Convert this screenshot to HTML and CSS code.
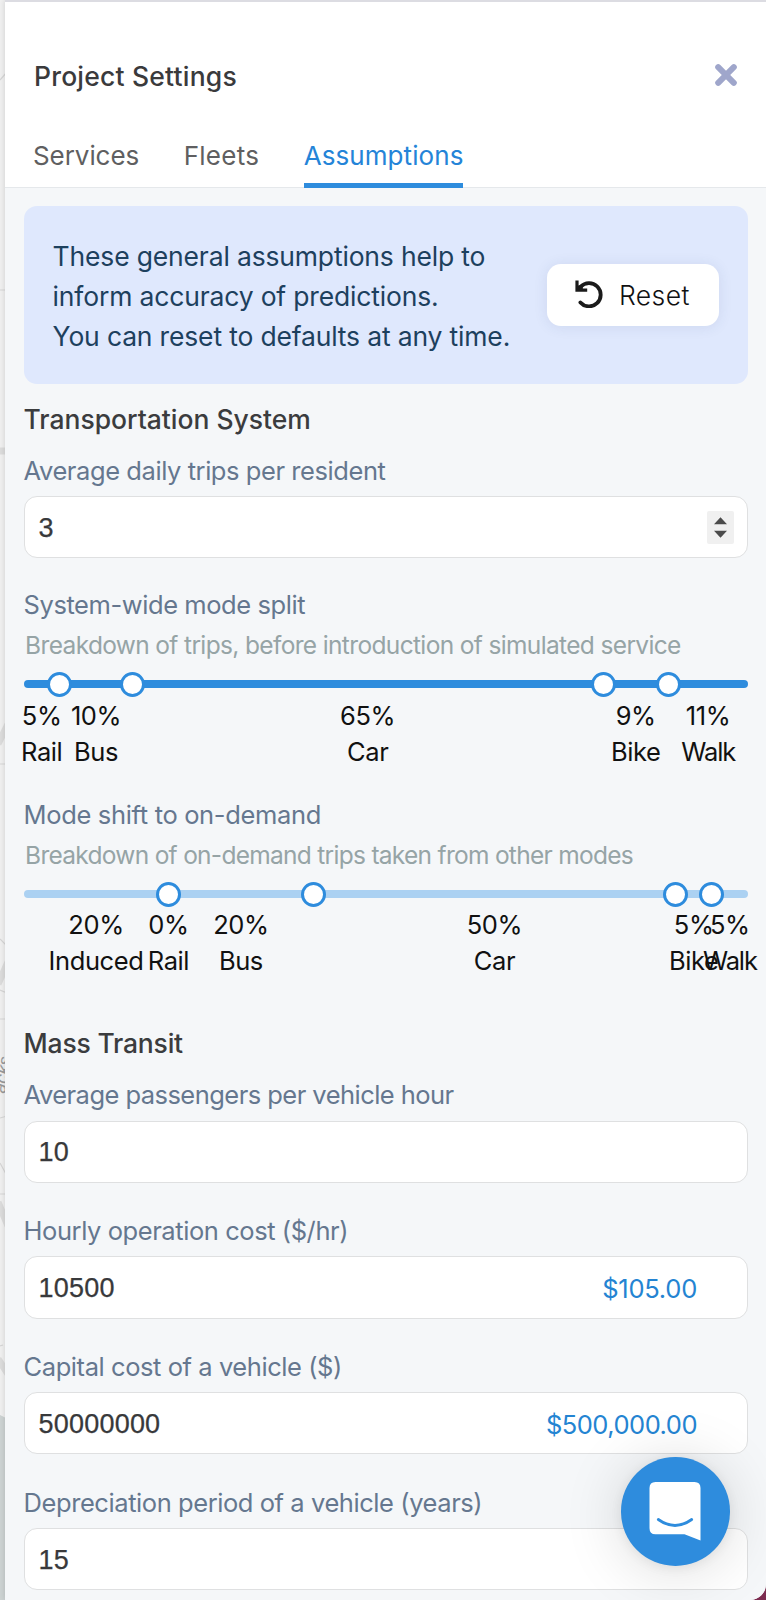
FILE: index.html
```
<!DOCTYPE html>
<html lang="en">
<head>
<meta charset="utf-8">
<title>Project Settings</title>
<link rel="stylesheet" href="styles.css">
</head>
<body>
<div class="app">
  <svg class="map" viewBox="0 0 20 1600" aria-hidden="true">
    <g fill="none" stroke="#d6d6d6" stroke-width="1.2">
      <path d="M0 80L7 72M0 290H7M0 764H7M0 939L6 945M0 990L7 993M0 1019H7M0 1118L7 1116M0 1163L6 1174M0 1194H7M0 1346L3 1345"/>
      <path stroke-width="7" stroke="#dcdcdc" d="M0 451H7M-2 744L8 724M-2 984L8 962M-2 1202L8 1226M-2 1359L8 1374"/>
    </g>
    <path fill="#cdd3d3" d="M0 1415L6 1418V1600H0z"/>
    <text class="street" transform="translate(5 1094) rotate(-80)">acks</text>
  </svg>
  <main class="panel">
    <header class="header">
      <div class="title-row">
        <h1 class="title">Project Settings</h1>
        <svg class="close" viewBox="0 0 22 22"><path d="M3.2 3.2L18.8 18.8M18.8 3.2L3.2 18.8"/></svg>
      </div>
      <nav class="tabs">
        <a class="tab">Services</a>
        <a class="tab fleets">Fleets</a>
        <a class="tab active">Assumptions</a>
      </nav>
    </header>
    <div class="content">
      <section class="banner">
        <p class="banner-text">These general assumptions help to<br>inform accuracy of predictions.<br>You can reset to defaults at any time.</p>
        <button class="reset">
          <svg class="reset-icon" viewBox="0 0 28 28"><path class="arc" d="M5.6 6.8A11.6 11.6 0 1 1 5.4 22.4"/><path class="head" d="M.4 .6H3.6V5.4L7.8 4.6V8.5H12.2V11.8H.4z"/></svg>
          <span>Reset</span>
        </button>
      </section>

      <h2 class="section">Transportation System</h2>
      <div class="field first">
        <div class="label">Average daily trips per resident</div>
        <div class="input"><span>3</span>
          <svg class="spinner" viewBox="0 0 27 33"><path d="M7 13.2L13.5 6.2L20 13.2zM7 19.8L13.5 26.8L20 19.8z"/></svg>
        </div>
      </div>

      <div class="split">
        <div class="label">System-wide mode split</div>
        <div class="hint">Breakdown of trips, before introduction of simulated service</div>
        <div class="slider">
          <i class="thumb" style="left:5%"></i><i class="thumb" style="left:15%"></i><i class="thumb" style="left:80%"></i><i class="thumb" style="left:89%"></i>
        </div>
        <div class="marks">
          <div class="mark" style="left:2.5%">5%<br>Rail</div>
          <div class="mark" style="left:10%">10%<br>Bus</div>
          <div class="mark" style="left:47.5%">65%<br>Car</div>
          <div class="mark" style="left:84.5%">9%<br>Bike</div>
          <div class="mark" style="left:94.5%">11%<br><span class="walk">Walk</span></div>
        </div>
      </div>

      <div class="split">
        <div class="label shift">Mode shift to on-demand</div>
        <div class="hint demand">Breakdown of on-demand trips taken from other modes</div>
        <div class="slider light">
          <i class="thumb" style="left:20%"></i><i class="thumb" style="left:40%"></i><i class="thumb" style="left:90%"></i><i class="thumb" style="left:95%"></i>
        </div>
        <div class="marks">
          <div class="mark" style="left:10%">20%<br>Induced</div>
          <div class="mark" style="left:20%">0%<br>Rail</div>
          <div class="mark" style="left:30%">20%<br>Bus</div>
          <div class="mark" style="left:65%">50%<br>Car</div>
          <div class="mark" style="left:92.5%">5%<br>Bike</div>
          <div class="mark" style="left:97.5%">5%<br><span class="walk">Walk</span></div>
        </div>
      </div>

      <h2 class="section transit">Mass Transit</h2>
      <div class="field">
        <div class="label passengers">Average passengers per vehicle hour</div>
        <div class="input"><span>10</span></div>
      </div>
      <div class="field">
        <div class="label">Hourly operation cost ($/hr)</div>
        <div class="input"><span>10500</span><span class="money hourly">$105.00</span></div>
      </div>
      <div class="field">
        <div class="label">Capital cost of a vehicle ($)</div>
        <div class="input"><span>50000000</span><span class="money">$500,000.00</span></div>
      </div>
      <div class="field">
        <div class="label">Depreciation period of a vehicle (years)</div>
        <div class="input"><span>15</span></div>
      </div>
    </div>
  </main>
  <button class="chat" aria-label="Open chat">
    <svg class="chat-icon" viewBox="0 0 52 60"><path fill="#fff" d="M6.5 1H45.5Q51.5 1 51.5 7V59.5L35.5 53.2H6.5Q.5 53.2 .5 47.2V7Q.5 1 6.5 1z"/><path class="smile" d="M9.3 38.5Q26 50.5 42.7 38.5"/></svg>
  </button>
</div>
</body>
</html>
```
FILE: styles.css
```
* { box-sizing: border-box; }
body { margin: 0; font-family: Inter, "Liberation Sans", sans-serif; background: #7d2c50; }
h1, h2, p { margin: 0; }
button { border: 0; padding: 0; font-family: inherit; }

.app { position: relative; width: 766px; height: 1600px; overflow: hidden; border-bottom-right-radius: 16px; background: #f0f0f0; display: flex; }
.map { position: absolute; left: 0; top: 0; width: 20px; height: 1600px; }
.street { font: italic 18px "Liberation Sans", sans-serif; fill: #999; }
.panel { position: relative; margin-left: 5px; width: 761px; height: 1600px; background: #f5f7f9; border-top: 2px solid #dcdce2; box-shadow: 0 0 6px rgba(0, 0, 0, .14); overflow: hidden; }

.header { height: 186px; padding: 54px 0 0 28px; background: #fff; box-shadow: inset 0 -1px #e5e8eb; }
.title-row { display: flex; height: 85px; }
.title { flex: 1; padding-left: 1px; font-size: 26.5px; font-weight: 500; line-height: 40px; letter-spacing: .2px; color: #3a3a3c; }
.close { width: 22px; height: 22px; margin: 8px 29px 0 0; fill: none; stroke: #9fa6cb; stroke-width: 6; stroke-linecap: round; }
.tabs { display: flex; gap: 44.5px; }
.tab { height: 47px; font-size: 26px; line-height: 30px; letter-spacing: -.065px; color: #5f5f61; }
.fleets { letter-spacing: .257px; }
.active { letter-spacing: .079px; color: #2484d8; border-bottom: 5px solid #2e8cdd; }

.content { padding: 18px 18px 0 18.6px; }
.banner { display: flex; justify-content: space-between; align-items: center; height: 177.5px; padding: 0 29px 0 29px; border-radius: 13px; background: #dfe8fd; }
.banner-text { font-size: 26.5px; line-height: 39.7px; letter-spacing: -.166px; color: #1d405e; padding-top: 4.5px; white-space: nowrap; }
.reset { display: flex; align-items: center; width: 172px; height: 61.5px; padding-left: 28.5px; border-radius: 14px; background: #fff; box-shadow: 0 1px 14px rgba(50, 70, 120, .1); color: #111; font-size: 26.5px; font-weight: 300; letter-spacing: .4px; }
.reset-icon { width: 28px; height: 28px; margin: -2px 16px 0 -.5px; }
.arc { fill: none; stroke: #1b1b1b; stroke-width: 3.8; stroke-linecap: round; }
.head { fill: #1b1b1b; }

.section { height: 32px; margin-top: 19.6px; font-size: 26.5px; font-weight: 550; line-height: 32px; letter-spacing: -.02px; color: #3b3c3e; }
.transit { margin-top: 48px; padding-top: 1px; letter-spacing: -.2px; }
.field { margin-bottom: 32.3px; }
.section + .field { margin-top: 21px; }
.section + .first { margin-top: 19.9px; margin-bottom: 30.7px; }
.label { height: 30px; padding-top: 1px; font-size: 25.5px; line-height: 30px; letter-spacing: -.43px; color: #65778f; white-space: nowrap; }
.shift { letter-spacing: -.34px; }
.passengers { letter-spacing: -.54px; }
.input { display: flex; align-items: center; justify-content: space-between; height: 62.3px; margin-top: 11.2px; padding: 1px 13px 0; border: 1.5px solid #dfe0e1; border-radius: 13px; background: #fff; font: 27px "Liberation Sans", sans-serif; letter-spacing: .2px; color: #38393b; }
.input > span { padding: 1px 0 0 1px; -webkit-text-stroke: .25px #38393b; }
.spinner { width: 27px; height: 33px; background: #f0f0f0; border-radius: 2px; fill: #4b4b4b; }
.input > .money { padding-top: 1px; margin-right: 37px; font: 25.5px Inter, sans-serif; letter-spacing: -.499px; color: #2484d2; -webkit-text-stroke: 0; }
.input > .hourly { letter-spacing: -.237px; }

.split { margin-bottom: 30.3px; }
.hint { margin-top: 9.9px; padding: 1px 0 0 1.5px; height: 30px; font-size: 24.5px; line-height: 30px; letter-spacing: -.646px; color: #96a4a6; white-space: nowrap; }
.demand { letter-spacing: -.715px; }
.slider { position: relative; height: 8px; margin-top: 21.2px; border-radius: 4px; background: #2e8cdd; }
.light { background: #abd1f2; }
.thumb { position: absolute; top: -8.5px; width: 25px; height: 25px; margin-left: -12.5px; border: 3.4px solid #2e8cdd; border-radius: 50%; background: #fff; }
.marks { position: relative; height: 72px; margin-top: 8.4px; }
.mark { position: absolute; top: 1px; transform: translateX(-50%); font-size: 25.5px; line-height: 36px; letter-spacing: -.4px; text-align: center; color: #111; white-space: nowrap; }
.walk { letter-spacing: -1.1px; }

.chat { position: absolute; left: 621px; top: 1457px; width: 108.5px; height: 108.5px; display: flex; align-items: center; justify-content: center; border-radius: 50%; background: #2e8cdd; box-shadow: 0 2px 12px rgba(0, 0, 0, .07), 0 4px 60px rgba(0, 0, 0, .15); }
.chat-icon { width: 52px; height: 60px; }
.smile { fill: none; stroke: #2e8cdd; stroke-width: 2.8; stroke-linecap: round; }
```
